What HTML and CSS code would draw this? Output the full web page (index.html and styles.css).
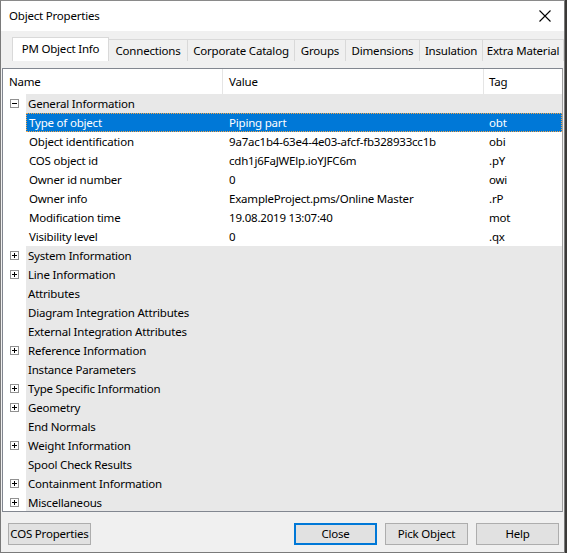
FILE: index.html
```html
<!DOCTYPE html>
<html>
<head>
<meta charset="utf-8">
<link rel="stylesheet" href="styles.css">
</head>
<body>
<div class="window">
  <div class="titlebar">
    <span class="title">Object Properties</span>
    <svg class="close-x" width="12" height="12" viewBox="0 0 12 12"><path d="M0.5 0.5 L11.5 11.5 M11.5 0.5 L0.5 11.5" stroke="#000" stroke-width="1.1" fill="none"/></svg>
  </div>
  <div class="client">
    <div class="tabs">
      <div class="tab active w-pm">PM Object Info</div>
      <div class="tab w-conn">Connections</div>
      <div class="tab w-corp">Corporate Catalog</div>
      <div class="tab w-grp">Groups</div>
      <div class="tab w-dim">Dimensions</div>
      <div class="tab w-ins">Insulation</div>
      <div class="tab w-extra">Extra Material</div>
    </div>
    <div class="panel">
      <div class="list">
        <div class="header">
          <div class="hcell c-name">Name</div>
          <div class="hcell c-value">Value</div>
          <div class="hcell c-tag">Tag</div>
        </div>
        <div class="row group"><span class="exp"><span class="minus"></span></span><span class="cell c-name">General Information</span></div>
        <div class="row item selected"><span class="exp"></span><span class="cell c-name">Type of object</span><span class="cell c-value">Piping part</span><span class="cell c-tag">obt</span></div>
        <div class="row item"><span class="exp"></span><span class="cell c-name">Object identification</span><span class="cell c-value">9a7ac1b4-63e4-4e03-afcf-fb328933cc1b</span><span class="cell c-tag">obi</span></div>
        <div class="row item"><span class="exp"></span><span class="cell c-name">COS object id</span><span class="cell c-value">cdh1j6FaJWElp.ioYJFC6m</span><span class="cell c-tag">.pY</span></div>
        <div class="row item"><span class="exp"></span><span class="cell c-name">Owner id number</span><span class="cell c-value">0</span><span class="cell c-tag">owi</span></div>
        <div class="row item"><span class="exp"></span><span class="cell c-name">Owner info</span><span class="cell c-value">ExampleProject.pms/Online Master</span><span class="cell c-tag">.rP</span></div>
        <div class="row item"><span class="exp"></span><span class="cell c-name">Modification time</span><span class="cell c-value">19.08.2019 13:07:40</span><span class="cell c-tag">mot</span></div>
        <div class="row item"><span class="exp"></span><span class="cell c-name">Visibility level</span><span class="cell c-value">0</span><span class="cell c-tag">.qx</span></div>
        <div class="row group"><span class="exp"><span class="plus"></span></span><span class="cell c-name">System Information</span></div>
        <div class="row group"><span class="exp"><span class="plus"></span></span><span class="cell c-name">Line Information</span></div>
        <div class="row group"><span class="exp"></span><span class="cell c-name">Attributes</span></div>
        <div class="row group"><span class="exp"></span><span class="cell c-name">Diagram Integration Attributes</span></div>
        <div class="row group"><span class="exp"></span><span class="cell c-name">External Integration Attributes</span></div>
        <div class="row group"><span class="exp"><span class="plus"></span></span><span class="cell c-name">Reference Information</span></div>
        <div class="row group"><span class="exp"></span><span class="cell c-name">Instance Parameters</span></div>
        <div class="row group"><span class="exp"><span class="plus"></span></span><span class="cell c-name">Type Specific Information</span></div>
        <div class="row group"><span class="exp"><span class="plus"></span></span><span class="cell c-name">Geometry</span></div>
        <div class="row group"><span class="exp"></span><span class="cell c-name">End Normals</span></div>
        <div class="row group"><span class="exp"><span class="plus"></span></span><span class="cell c-name">Weight Information</span></div>
        <div class="row group"><span class="exp"></span><span class="cell c-name">Spool Check Results</span></div>
        <div class="row group"><span class="exp"><span class="plus"></span></span><span class="cell c-name">Containment Information</span></div>
        <div class="row group"><span class="exp"><span class="plus"></span></span><span class="cell c-name">Miscellaneous</span></div>
      </div>
    </div>
    <div class="buttons">
      <button class="btn btn-cos">COS Properties</button>
      <div class="spacer"></div>
      <button class="btn default">Close</button>
      <button class="btn">Pick Object</button>
      <button class="btn">Help</button>
    </div>
  </div>
</div>
</body>
</html>
```

FILE: styles.css
```css
html, body {
  margin: 0;
  padding: 0;
  background: #3b3a38;
  width: 567px;
  height: 553px;
  overflow: hidden;
}
.window {
  width: 563px;
  height: 551px;
  border: 1px solid #7a7a7a;
  border-top-color: #8a8a8a;
  background: #f0f0f0;
  display: flex;
  flex-direction: column;
  font-family: "Noto Sans", "Open Sans", sans-serif;
  font-size: 11.5px;
  letter-spacing: -0.2px;
  color: #000;
}
.titlebar {
  height: 30px;
  background: #fff;
  display: flex;
  align-items: center;
  justify-content: space-between;
  padding: 0 9px 0 8px;
}
.title {
  line-height: 16px;
}
.close-x {
  margin-right: 4px;
}
.client {
  flex: 1;
  display: flex;
  flex-direction: column;
}
.tabs {
  display: flex;
  align-items: flex-end;
  height: 30px;
  padding-left: 11px;
  box-sizing: border-box;
}
.tab {
  height: 22px;
  line-height: 21px;
  padding: 0;
  text-align: center;
  border: 1px solid #d9d9d9;
  border-bottom: none;
  border-left: none;
  background: #f0f0f0;
  box-sizing: border-box;
  white-space: nowrap;
  flex: none;
}
.tab.active {
  height: 24px;
  line-height: 22px;
  background: #fff;
  border-left: 1px solid #d9d9d9;
}
.w-pm { width: 97px; }
.w-conn { width: 79px; }
.w-corp { width: 107px; }
.w-grp { width: 51px; }
.w-dim { width: 74px; }
.w-ins { width: 63px; }
.w-extra { width: 81px; }
.panel {
  padding: 7px 0 0 1px;
}
.list {
  width: 561px;
  height: 444px;
  border: 1px solid #828790;
  border-right-color: #a0a0a0;
  background: #fff;
  box-sizing: border-box;
  overflow: hidden;
}
.header {
  display: flex;
  height: 25px;
  align-items: center;
  background: #fff;
}
.hcell {
  height: 25px;
  line-height: 25px;
  box-sizing: border-box;
  padding-left: 6px;
  border-right: 1px solid #e5e5e5;
}
.header .c-name { width: 220px; }
.header .c-value { width: 261px; }
.header .c-tag { flex: 1; border-right: none; padding-left: 5px; }
.row {
  display: flex;
  height: 19px;
  line-height: 19px;
  white-space: nowrap;
}
.exp {
  width: 23px;
  flex: none;
  background: #fff;
  position: relative;
}
.row.group {
  background: #e8e8e8;
}
.row.item {
  background: #fff;
}
.cell {
  flex: none;
  overflow: hidden;
}
.row .c-name { width: 197px; padding-left: 2px; box-sizing: border-box; }
.row.item .c-name { padding-left: 3px; }
.row .c-value { width: 261px; padding-left: 6px; box-sizing: border-box; }
.row .c-tag { flex: 1; padding-left: 5px; }
.row.selected {
  background: transparent;
  position: relative;
}
.row.selected .cell {
  background: #0078d7;
  color: #fff;
}
.row.selected::after {
  content: "";
  position: absolute;
  left: 23px;
  right: 0;
  top: 0;
  bottom: 0;
  border: 1px dotted #f5a445;
}
.minus, .plus {
  position: absolute;
  left: 7px;
  top: 5px;
  width: 9px;
  height: 9px;
  border: 1px solid #919191;
  box-sizing: border-box;
  background: #fff;
}
.minus::before, .plus::before {
  content: "";
  position: absolute;
  left: 1px;
  top: 3px;
  width: 5px;
  height: 1px;
  background: #000;
}
.plus::after {
  content: "";
  position: absolute;
  left: 3px;
  top: 1px;
  width: 1px;
  height: 5px;
  background: #000;
}
.buttons {
  display: flex;
  padding: 11px 5px 0 7px;
  gap: 8px;
}
.spacer { flex: 1; }
.btn {
  font-family: "Noto Sans", "Open Sans", sans-serif;
  font-size: 11.5px;
  letter-spacing: -0.2px;
  width: 83px;
  height: 22px;
  background: #e1e1e1;
  border: 1px solid #adadad;
  padding: 0;
  margin: 0;
  color: #000;
  line-height: 18px;
  white-space: nowrap;
  text-align: center;
}
.btn.default {
  border: 2px solid #0078d7;
}
```
